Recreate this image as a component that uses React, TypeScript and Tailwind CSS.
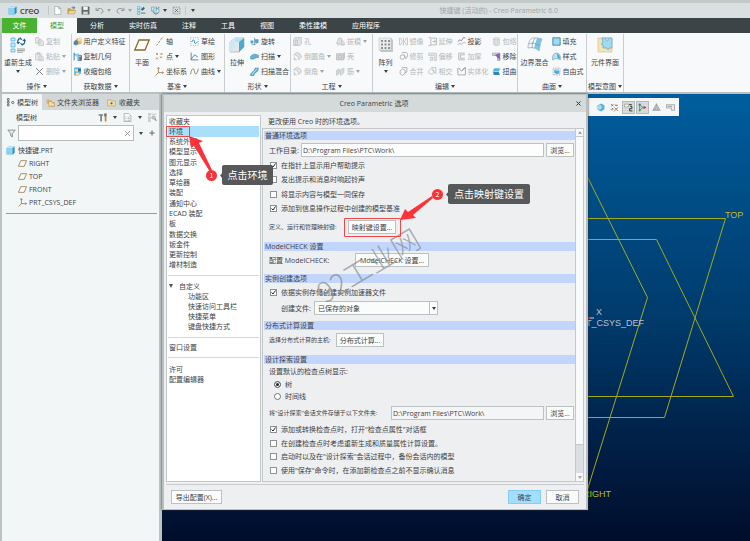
import React, { useState } from "react";

const BLUE = "#2b8fc0";
const SKY = "#8fd0ee";
const GOLD = "#8a6a2e";
const GRAY = "#b4b8ba";

const shapes: Record<string, React.ReactNode> = {
  cube: (
    <>
      <path d="M1 4l3-3h11v11l-3 3H1z" fill="#5db9e2" />
      <path d="M1 4h11v11H1z" fill={SKY} />
      <path d="M1 4l3-3h11l-3 3z" fill="#c5e9f8" />
      <path d="M12 4l3-3v11l-3 3z" fill={BLUE} />
    </>
  ),
  file: <path d="M3 1h7l4 4v10H3zM10 1v4h4" fill="#fff" stroke="#8d9496" />,
  open: (
    <>
      <path d="M1 14V4h5l1 2h6v8z" fill="#c69a4c" />
      <path d="M1 14l3-6h12l-3 6z" fill="#f3d48f" stroke="#a87f38" strokeWidth=".7" />
      <path d="M8 3c2-2 4-1 5 1M13 1v3h-3" fill="none" stroke="#333" />
    </>
  ),
  save: (
    <>
      <path d="M1 1h13l1 1v13H1z" fill="#62696c" />
      <path d="M4 1h8v6H4z" fill="#f2f4f4" />
      <path d="M4 10h8v5H4z" fill="#d3d7d8" />
    </>
  ),
  undo: <path d="M2 3v5h5M2 8c3-5 12-5 12 1 0 3-2 4-4 4" fill="none" stroke="#8c9496" strokeWidth="1.6" />,
  redo: <path d="M14 3v5H9M14 8C11 3 2 3 2 9c0 3 2 4 4 4" fill="none" stroke="#8c9496" strokeWidth="1.6" />,
  regen: (
    <>
      <path d="M1 1h4v4H1zM1 6h4v4H1zM1 11h4v4H1z" fill="#d9f1fb" stroke={BLUE} strokeWidth=".8" />
      <path d="M7 11h8v1H7zM7 13h8v1H7z" fill="#888" />
      <path d="M8 3h3V1l3 3-3 3V5H8z" fill="#1d6c98" />
      <path d="M13 7h-3v2L7 6l3-2z" fill="#1d6c98" />
    </>
  ),
  bigRegen: (
    <>
      <path d="M1 1h4v3H1zM1 6h4v4H1zM1 12h4v3H1z" fill="#c9ecfa" stroke="#3fa9d6" strokeWidth=".7" />
      <path d="M7 12h8M7 13.600h8M7 15.200h6" stroke="#777" strokeWidth=".7" />
      <path d="M8 6C7 3 9 1 11 2L10 0.500M14.500 3c1 3-1 5-3 4l1 1.500" fill="none" stroke="#155f8d" strokeWidth="1.200" />
      <path d="M6.500 5h3.500L8.300 7.500zM12.500 4H16l-1.700-2.500z" fill="#155f8d" />
    </>
  ),
  windows: (
    <>
      <path d="M1 2h9v7H1zM4 5h10v7H4z" fill="#dff3fb" stroke="#4a88a8" />
      <path d="M5 12c1 3 5 3 7 1M15 2l-3 2" fill="none" stroke="#333" />
    </>
  ),
  closeWin: (
    <>
      <path d="M2 2h12v12H2z" fill="none" stroke="#656c6f" strokeDasharray="3 1.500" />
      <path d="M5 5l6 6M11 5l-6 6" stroke="#656c6f" strokeWidth="1.500" />
    </>
  ),
  copy: <path d="M1 1h6l2 2v8H1zM6 5h6l3 3v7H6z" fill="#e4e6e7" stroke={GRAY} />,
  paste: <path d="M1 3h10v11H1zM4 1h4v3H4zM7 7h5l3 3v5H7z" fill="#e8eaeb" stroke={GRAY} />,
  del: <path d="M2 2l12 12M14 2L2 14" stroke="#777d80" strokeWidth="1.700" />,
  udf: (
    <>
      <path d="M5 3l8-2 2 3v8l-7 2z" fill="#e8b267" />
      <path d="M1 9l4-4 4 3v5l-4 2-4-2z" fill="#4e86b8" />
      <path d="M9 2h5v5H9z" fill="#fbe1b3" />
    </>
  ),
  geom: (
    <>
      <path d="M2 1v14M2 5h4M9 3v12h6V6H9" fill="none" stroke="#2d7da8" strokeWidth="1.600" />
      <path d="M5 3h5v5H5z" fill={SKY} />
      <path d="M11 8h4v6h-4z" fill="#666" />
    </>
  ),
  shrink: (
    <>
      <path d="M2 1h12v10l-4 4H2z" fill="#5fb6de" />
      <path d="M4 4h6v4H4zM5 10h6v4H5z" fill="#fbe39a" />
      <path d="M9 3h5v5H9z" fill="#2c6f9b" />
    </>
  ),
  plane: <path d="M5 3h10.200l-4.200 10H.8z" fill="#fdfdf8" stroke={GOLD} strokeWidth="1.300" />,
  axis: <path d="M13 1L3 15" stroke={GOLD} strokeWidth="1.300" strokeDasharray="5 2" />,
  point: <path d="M2 2l3 3M5 2L2 5M10 2l3 3M13 2l-3 3M2 10l3 3M5 10l-3 3M9 8l3 3M12 8l-3 3" stroke={GOLD} strokeWidth="1.200" />,
  csys: <path d="M6 1v9h9M6 10l-5 5M4 3l2-2 2 2M13 8l2 2-2 2" fill="none" stroke={GOLD} strokeWidth="1.300" />,
  sketch: (
    <>
      <path d="M1 1h14v14H1z" fill="none" stroke="#4aa6d2" strokeDasharray="2 2" />
      <path d="M3 9c3-7 5-3 5 0s3 4 5-1" fill="none" stroke="#1e7fb4" strokeWidth="1.600" />
    </>
  ),
  graph: (
    <>
      <path d="M2 1v13h13" fill="none" stroke="#555" strokeWidth="1.300" />
      <path d="M2 13l6-8 6 4" fill="none" stroke="#238bbf" strokeWidth="1.500" />
    </>
  ),
  curve: <path d="M1 13C3 1 7 1 8 8s4 6 7-5" fill="none" stroke={GOLD} strokeWidth="1.400" />,
  extrude: (
    <>
      <path d="M1 5l5-4h9v9l-5 5H1z" fill="#e3e8ea" stroke="#9ba8ae" strokeWidth=".6" />
      <path d="M6 1h9l-5 4H1z" fill="#b9e2f3" />
      <path d="M15 1v9L10 15V5z" fill="#4ba9d2" />
      <path d="M6 1v9L1 15V5z" fill="#cfe9f4" />
    </>
  ),
  revolve: (
    <>
      <path d="M1 6h5v5H1zM9 4h6v6H9z" fill="#4aa5cf" />
      <path d="M2 12c4 3 9 2 12-4M8 1v13" fill="none" stroke="#356e8b" />
    </>
  ),
  sweep: <path d="M1 8c4-5 9-5 14-2v4c-5-2-8 5-14 2z" fill="#5fb5da" stroke="#32718f" strokeWidth=".8" />,
  sweepBlend: (
    <>
      <path d="M1 15c0-7 7-5 8-13h6c-1 9-7 6-8 13z" fill="#5fb5da" stroke="#32718f" />
      <path d="M4 14C5 8 10 9 12 3" fill="none" stroke="#fff" />
    </>
  ),
  hole: <path d="M1 4l3-3h11v11l-3 3H1zM4 6h4v8H4z" fill="#dfe1e2" stroke={GRAY} />,
  round: <path d="M1 5l5-4c6 0 9 4 9 8l-5 5c0-5-3-9-9-9zM2 8v6h5" fill="#dfe1e2" stroke={GRAY} />,
  draft: <path d="M4 2h5l1 10H1zM9 2l6 9v3h-5M2 14h12" fill="#dfe1e2" stroke={GRAY} />,
  shell: <path d="M1 3h12v11H1zM4 6h6v5H4zM13 3l2-2v11l-2 2" fill="#d7dadb" stroke={GRAY} strokeWidth="1.300" />,
  rib: <path d="M1 6l4-3v9l-4 3zM6 6l8-4v8l-6 5z" fill="#d7dadb" stroke={GRAY} />,
  pattern: (
    <>
      <path d="M1 1h12l2 2v12H3l-2-2z" fill="#c4c7c8" />
      <path d="M1 1h12v12H1z" fill="#eceeee" stroke="#b7babb" strokeWidth=".5" />
      <path d="M3 3h2v2H3zM6.500 3h2v2h-2zM10 3h2v2h-2zM3 6.500h2v2H3zM6.500 6.500h2v2h-2zM10 6.500h2v2h-2zM3 10h2v2H3zM6.500 10h2v2h-2zM10 10h2v2h-2z" fill="#8f9394" />
    </>
  ),
  mirror: <path d="M8 1v14M1 2h2l3 6-3 6H1zM15 2h-2l-3 6 3 6h2z" fill="none" stroke={GRAY} strokeWidth="1.300" />,
  extend: <path d="M1 1h4v14H1M6 2h9v12H6M8 8h5M11 5l3 3-3 3" fill="none" stroke="#9ea3a5" strokeWidth="1.200" />,
  project: (
    <>
      <path d="M2 8c3-7 5 2 7-3s4-4 6-3" fill="none" stroke="#8656ad" strokeWidth="1.500" />
      <path d="M1 14c4-5 6 0 8-2s4-3 6-1" fill="none" stroke="#777" />
    </>
  ),
  trim: <path d="M5 1h8l2 2v6l-4 3M10 9a4 4 0 11-8 0 4 4 0 018 0zM8 4l5 7" fill="none" stroke="#a5a9ab" strokeWidth="1.400" />,
  offset: <path d="M1 2h14v13h-4V6H1zM4 9h4v6H4z" fill="#e2e4e5" stroke={GRAY} />,
  thicken: <path d="M14 2H3v12h11M14 5H6v6h8" fill="none" stroke="#a0a4a6" strokeWidth="1.300" />,
  merge: <path d="M6 1h8v8l-4 2M2 7l4-4 5 3v5l-5 4-4-3z" fill="none" stroke="#a0a4a6" strokeWidth="1.400" />,
  intersect: <path d="M10 5a5 5 0 11-9 4c0-4 5-8 9-4zM6 1h8v11l-7-7" fill="none" stroke={GRAY} strokeWidth="1.400" />,
  solidify: <path d="M1 3h4c0 5 5 5 6 0l4-2v13H2zM9 7l6-6" fill="none" stroke="#8e9395" strokeWidth="1.300" />,
  wrap: (
    <>
      <path d="M3 3v10c0 3 10 3 10 0V3z" fill="#dcdfe0" stroke={GRAY} />
      <ellipse cx="8" cy="3" rx="5" ry="2" fill="#eceeee" stroke={GRAY} />
    </>
  ),
  remove: (
    <>
      <path d="M1 2h13v13h-4V6H1z" fill="#e6dff0" stroke="#777" />
      <path d="M5 5l9 9V2z" fill="#8b5fb5" />
    </>
  ),
  warp: (
    <>
      <path d="M4 2h11l-3 6H1z" fill="#56b4de" />
      <path d="M2 9h10l2 5H3z" fill="#2f86b1" />
    </>
  ),
  boundary: (
    <>
      <path d="M4 2c3-2 7-1 11 0-2 4-2 8-3 12-3-3-7-4-11-3 0-4 1-7 3-9z" fill="#f3f8fa" stroke="#85949b" strokeWidth=".6" />
      <path d="M10 1c2 0 3 0 5 1-2 4-2 8-3 12-2-2-3-2-5-3 1-3 2-7 3-10z" fill="#79c6e8" />
      <path d="M2 7c4-2 8 0 11 2M8 1C6 4 5 8 5 11" fill="none" stroke="#71858e" strokeWidth=".6" />
    </>
  ),
  fill: <path d="M1.500 1.500h13v13h-13z" fill="#9adcf4" stroke="#2d6f8e" strokeWidth="1.400" />,
  style: (
    <>
      <path d="M1 14C1 5 3 2 8 2s7 3 7 12c-4-3-9-3-14 0z" fill="#b5e2f4" stroke="#5d8ca2" />
      <path d="M9 3c3 0 5 4 5 9l-4-1z" fill="#43a8d5" />
    </>
  ),
  freestyle: (
    <>
      <path d="M2 2h12v12H2z" fill="none" stroke="#5c646a" strokeDasharray="2 2" />
      <path d="M4 5l5-2 4 3v5l-5 2-4-3z" fill="#49abd7" />
      <path d="M4 5l5-2 4 3-5 1z" fill="#a8def4" />
    </>
  ),
  component: (
    <>
      <path d="M1 1h14v14H1z" fill="#f7e3b8" stroke="#d6bb82" strokeWidth=".6" />
      <path d="M5 1h10v10h-3c1 2-3 2-2 0H6V8c-2 1-2-3 0-2z" fill="#9edcf4" stroke="#4b9dc2" strokeWidth=".6" />
      <path d="M9 1c-1 4 3 4 2 1" fill="#f7e3b8" stroke="#4b9dc2" strokeWidth=".6" />
    </>
  ),
  tree: (
    <>
      <path d="M4 4v2M4 9v2" stroke="#555" />
      <path d="M2.500 1h3v3h-3zM2.500 6h3v3h-3zM2.500 11h3v3h-3z" fill="#fff" stroke="#444" strokeWidth="1.200" />
      <circle cx="12" cy="8" r="2" fill="none" stroke="#444" strokeWidth="1.300" />
    </>
  ),
  folders: (
    <>
      <path d="M1 2h5l1 2h4v6H1z" fill="#e2b565" />
      <path d="M5 6h5l1 2h4v7H5z" fill="#fbe2a8" stroke="#b98a39" />
      <path d="M10 10h4v4h-4z" fill="#fff" stroke="#888" strokeWidth=".7" />
    </>
  ),
  favorites: (
    <>
      <path d="M1 3h5l1 2h8v9H1z" fill="#f6dea5" stroke="#c09a51" />
      <circle cx="8" cy="9.500" r="2" fill="#2573a5" />
    </>
  ),
  tools: (
    <>
      <path d="M1 2h8v3H7v10H4V5H1z" fill="#7c8284" />
      <path d="M12 1h3v14h-3z" fill="#b98639" />
      <path d="M11 1h4v5h-4z" fill="#6d7375" />
    </>
  ),
  report: <path d="M2 1h8l4 4v10H2zM4 7h2M8 7h4M4 10h2M8 10h4M4 13h2M8 13h4" fill="#fff" stroke="#7b8285" />,
  search: (
    <>
      <path d="M1 1h3v3H1zM1 7h3v3H1zM1 12h3v3H1zM6 2h9M6 8h2" fill="none" stroke="#9da2a4" />
      <circle cx="10" cy="8" r="3" fill="#c9cccd" stroke="#8d9294" />
      <path d="M12 10l3 4" stroke="#8d9294" strokeWidth="2" />
    </>
  ),
  funnel: <path d="M1.500 2h13L9.500 8v6l-3-2V8z" fill="#eef0f0" stroke="#666d70" strokeWidth="1.300" />,
  plus: <path d="M8 1v14M1 8h14" stroke="#555b5e" strokeWidth="2.400" />,
  shade: (
    <>
      <path d="M2 5l7-4 6 3v7l-6 4-6-3z" fill="#58b2dc" />
      <path d="M1 6l7-3 3 5-4 4-5-2z" fill="#a7dbf0" />
    </>
  ),
  datum: (
    <>
      <path d="M2 2l4 4M6 2L2 6M8 8l6 6M14 8l-7 7M10 4h4M1 12h4" stroke={GOLD} strokeWidth="1.400" />
      <path d="M9 3l2 2M4 9l2 2" stroke="#333" strokeWidth="1.500" />
    </>
  ),
  annot: (
    <>
      <path d="M1 2h7v5H1z" fill="#fbf4d6" stroke="#888" />
      <path d="M9 3h5M11 6h3v4h-4v4h5" fill="none" stroke="#333" strokeWidth="1.700" />
    </>
  ),
  spin: (
    <>
      <path d="M3 3v10M4 4l5 4-5 4M9 8h5" fill="none" stroke="#2e8a8a" strokeWidth="1.500" />
      <circle cx="3" cy="3" r="2" fill="#2c7abd" />
      <circle cx="3" cy="13" r="2" fill="#4aa548" />
      <path d="M10 5l5 3-5 3z" fill="#cf3b3b" />
    </>
  ),
  persp: <path d="M8 2l6 11H2zM8 7l3 5H5z" fill="none" stroke="#9da2a4" strokeWidth="1.800" />,
  flag: <path d="M1 3h14v10h-5V9H1zM3 6h8" fill="none" stroke="#a9adaf" strokeWidth="1.900" />,
};

function Icon({ name, big = false }: { name: string; big?: boolean }) {
  return (
    <svg viewBox="0 0 16 16" className={big ? "size-4 shrink-0" : "size-[9px] shrink-0"} aria-hidden="true">
      {shapes[name]}
    </svg>
  );
}

function Caret({ dim = false }: { dim?: boolean }) {
  return (
    <svg viewBox="0 0 4 3" className="h-[3px] w-1 shrink-0" aria-hidden="true">
      <path d="M0 0h4L2 3z" fill={dim ? "#9ea3a5" : "#3b4042"} />
    </svg>
  );
}

type Cmd = { icon: string; text: string; off?: boolean; menu?: boolean };
const c = (icon: string, text: string, flags = ""): Cmd => ({
  icon,
  text,
  off: flags.includes("x"),
  menu: flags.includes("v"),
});

type Group = {
  title: string;
  width: string;
  big?: { icon: string; text: string; width: string; menu?: boolean };
  cols: { width: string; items: Cmd[] }[];
};

const groups: Group[] = [
  {
    title: "操作",
    width: "w-[70px]",
    big: { icon: "bigRegen", text: "重新生成", width: "w-8", menu: true },
    cols: [{ width: "w-[36px]", items: [c("copy", "复制", "x"), c("paste", "粘贴", "xv"), c("del", "删除", "xv")] }],
  },
  {
    title: "获取数据",
    width: "w-[58px]",
    cols: [{ width: "w-[56px]", items: [c("udf", "用户定义特征"), c("geom", "复制几何"), c("shrink", "收缩包络")] }],
  },
  {
    title: "基准",
    width: "w-[95px]",
    big: { icon: "plane", text: "平面", width: "w-6" },
    cols: [
      { width: "w-[34px]", items: [c("axis", "轴"), c("point", "点", "v"), c("csys", "坐标系")] },
      { width: "w-[34px]", items: [c("sketch", "草绘"), c("graph", "图形"), c("curve", "曲线", "v")] },
    ],
  },
  {
    title: "形状",
    width: "w-[66px]",
    big: { icon: "extrude", text: "拉伸", width: "w-6" },
    cols: [{ width: "w-[40px]", items: [c("revolve", "旋转"), c("sweep", "扫描", "v"), c("sweepBlend", "扫描混合")] }],
  },
  {
    title: "工程",
    width: "w-[82px]",
    cols: [
      { width: "w-[42px]", items: [c("hole", "孔", "x"), c("round", "倒圆角", "xv"), c("round", "倒角", "xv")] },
      { width: "w-[34px]", items: [c("draft", "拔模", "xv"), c("shell", "壳", "x"), c("rib", "筋", "xv")] },
    ],
  },
  {
    title: "编辑",
    width: "w-[145px]",
    big: { icon: "pattern", text: "阵列", width: "w-6", menu: true },
    cols: [
      { width: "w-[28px]", items: [c("mirror", "镜像", "x"), c("trim", "修剪", "x"), c("merge", "合并", "x")] },
      { width: "w-[28px]", items: [c("extend", "延伸", "x"), c("offset", "偏移", "x"), c("intersect", "相交", "x")] },
      { width: "w-[34px]", items: [c("project", "投影"), c("thicken", "加厚", "x"), c("solidify", "实体化", "x")] },
      { width: "w-[25px]", items: [c("wrap", "包络", "x"), c("remove", "移除"), c("warp", "扭曲")] },
    ],
  },
  {
    title: "曲面",
    width: "w-[69px]",
    big: { icon: "boundary", text: "边界混合", width: "w-8" },
    cols: [{ width: "w-[34px]", items: [c("fill", "填充"), c("style", "样式"), c("freestyle", "自由式")] }],
  },
  {
    title: "模型意图",
    width: "w-[37px]",
    big: { icon: "component", text: "元件界面", width: "w-8" },
    cols: [],
  },
];

function RibbonGroup({ g }: { g: Group }) {
  return (
    <section className={`flex shrink-0 flex-col border-r border-[#c9cdcf] px-px ${g.width}`}>
      <div className="flex h-[46px] justify-center gap-px">
        {g.big && (
          <button className={`flex shrink-0 flex-col items-center pt-[3px] ${g.big.width}`}>
            <Icon name={g.big.icon} big />
            <span className="mt-[6px] h-[11px]">{g.big.text}</span>
            {g.big.menu && <Caret />}
          </button>
        )}
        {g.cols.map((col, i) => (
          <div key={i} className={`flex shrink-0 flex-col ${col.width}`}>
            {col.items.map((it) => (
              <button
                key={it.text}
                disabled={it.off}
                className="flex h-[15px] items-center gap-[2px] text-left disabled:text-[#b3b7b9]"
              >
                <Icon name={it.icon} />
                <span>{it.text}</span>
                {it.menu && <Caret dim={it.off} />}
              </button>
            ))}
          </div>
        ))}
      </div>
      <div className="flex flex-1 items-center justify-center gap-[2px]">
        <span>{g.title}</span>
        <Caret />
      </div>
    </section>
  );
}

const quick: [string, string, boolean][] = [
  ["file", "新建", false],
  ["open", "打开", false],
  ["save", "保存", false],
  ["undo", "撤消", true],
  ["redo", "重做", true],
  ["regen", "重新生成", false],
  ["windows", "窗口", true],
  ["closeWin", "关闭", false],
];

function TopBar() {
  return (
    <header>
      <div className="flex h-[18px] items-center border-t-[3px] border-[#c3c9c9] bg-[#dadfdf] pb-px pl-2">
        <Icon name="cube" />
        <span className="ml-[3px] w-[28px] font-['Lato',sans-serif] text-[10px] text-[#333]">creo</span>
        <div className="flex items-center gap-[5px] border-x border-[#c1c7c8] px-1">
          {quick.map(([icon, label, menu]) => (
            <button key={icon} aria-label={label} className="flex items-center gap-[3px]">
              <Icon name={icon} />
              {menu && <Caret dim={icon !== "windows"} />}
            </button>
          ))}
        </div>
        <button aria-label="自定义快速访问工具栏" className="ml-[5px]">
          <Caret />
        </button>
        <span className="mr-[192px] ml-auto text-[#a0a6a8]">快捷键 (活动的) - Creo Parametric 6.0</span>
      </div>
      <nav className="ml-[2px] flex h-[15px] items-stretch bg-[#3b4446] text-white">
        <button className="w-[35px] bg-[#4ab233]">文件</button>
        <button className="w-10 bg-[#f7f9fa] text-[#4a9a30]">模型</button>
        {["分析", "实时仿真", "注释", "工具", "视图", "柔性建模", "应用程序"].map((t) => (
          <button key={t} className="ml-px px-3">
            {t}
          </button>
        ))}
      </nav>
      <div className="flex h-[61px] border-b-2 border-l-2 border-[#b9c0c2] bg-[#f7f9fa] pt-px">
        {groups.map((g) => (
          <RibbonGroup key={g.title} g={g} />
        ))}
      </div>
    </header>
  );
}

function ModelTree() {
  return (
    <aside className="w-[162px] shrink-0 border-r-[3px] border-l-2 border-[#bcc3c4] bg-[#f3f6f7]">
      <div className="flex h-4 bg-[#d2d8d9]">
        <button className="flex w-10 items-center gap-[2px] bg-[#f3f6f7] pl-1">
          <Icon name="tree" />
          模型树
        </button>
        <button className="flex w-[61px] items-center gap-[2px] pl-1">
          <Icon name="folders" />
          文件夹浏览器
        </button>
        <button className="flex items-center gap-[3px] pl-1">
          <Icon name="favorites" />
          收藏夹
        </button>
      </div>
      <div className="flex h-[15px] items-center gap-[6px] pr-[2px] pl-[14px]">
        <span className="mr-auto">模型树</span>
        <Icon name="tools" />
        <Caret />
        <Icon name="report" />
        <Caret />
        <Icon name="search" />
      </div>
      <div className="flex h-4 items-center gap-[5px] pr-1 pl-[5px]">
        <Icon name="funnel" />
        <label className="-ml-[3px] flex h-4 flex-1 items-center border border-[#b5bbbd] bg-white pr-[3px]">
          <input aria-label="筛选" className="w-0 flex-1 px-1 outline-none" />
          <svg viewBox="0 0 5 5" className="size-[5px]" aria-hidden="true">
            <path d="M0 0l5 5M5 0L0 5" stroke="#888" strokeWidth=".8" />
          </svg>
        </label>
        <Caret />
        <svg viewBox="0 0 16 16" className="ml-px size-[6px]" aria-hidden="true">
          {shapes.plus}
        </svg>
      </div>
      <ul className="mr-[2px] ml-1 border-b border-[#55d136] pt-[3px] pb-1">
        <li className="flex h-[13px] items-center gap-[3px]">
          <Icon name="cube" />
          快捷键.PRT
        </li>
        {["RIGHT", "TOP", "FRONT"].map((t) => (
          <li key={t} className="flex h-[13px] items-center gap-[2px] pl-3">
            <Icon name="plane" />
            {t}
          </li>
        ))}
        <li className="flex h-[13px] items-center gap-[2px] pl-3">
          <Icon name="csys" />
          PRT_CSYS_DEF
        </li>
      </ul>
    </aside>
  );
}

function Viewport() {
  return (
    <main className="relative flex-1 overflow-hidden bg-linear-to-b from-[#005e9e] via-[#003b6c] to-[#000d2c]">
      <svg
        viewBox="162 94 588 447"
        className="absolute top-0 left-0 h-[447px] w-[588px] font-['Liberation_Sans',sans-serif] text-[9px]"
      >
        <g fill="none" stroke="#a3a91c" strokeWidth="1">
          <path d="M587 176L647.500 297.500 587 491" />
          <path d="M587 218.500H725.500L664.500 417.500H587" />
          <path d="M587 239.500H656.500L733.500 396.500H587" />
        </g>
        <text x="725" y="218" fill="#b9bf1e">TOP</text>
        <text x="583" y="497" fill="#b9bf1e">RIGHT</text>
        <text x="644" y="326" fill="#b4c3d3" textAnchor="end">PRT_CSYS_DEF</text>
        <text x="596" y="315" fill="#b4c3d3">X</text>
        <path d="M587 318h7" stroke="#cfd6e0" />
        <path d="M587 316l4 2-4 2z" fill="#d5203c" />
      </svg>
      <div className="absolute top-[4px] left-[424px] flex h-[18px] items-center gap-[1px] bg-[#f4f6f7] pr-[2px] pl-2">
        {["shade", "datum", "annot", "spin", "persp", "flag"].map((n) => (
          <button
            key={n}
            aria-label={n}
            className={`flex size-[13px] items-center justify-center ${
              n === "annot" || n === "spin" ? "border border-[#b4babc] bg-[#d5dadb]" : ""
            }`}
          >
            <Icon name={n} />
          </button>
        ))}
      </div>
    </main>
  );
}

function Check({ label, on = false }: { label: string; on?: boolean }) {
  const [checked, setChecked] = useState(on);
  return (
    <label className="flex items-center gap-1">
      <span className="grid size-[7px]">
        <input
          type="checkbox"
          checked={checked}
          onChange={(e) => setChecked(e.target.checked)}
          className="col-start-1 row-start-1 size-[7px] appearance-none border border-[#8c9294] bg-white"
        />
        {checked && (
          <svg viewBox="0 0 7 7" className="pointer-events-none col-start-1 row-start-1 size-[7px]" aria-hidden="true">
            <path d="M1.500 3.500L3 5l2.500-3.500" fill="none" stroke="#222" />
          </svg>
        )}
      </span>
      {label}
    </label>
  );
}

function Radio({ label, on = false }: { label: string; on?: boolean }) {
  return (
    <label className="flex h-3 items-center gap-1 pl-[5px]">
      <input
        type="radio"
        name="checkpoint"
        defaultChecked={on}
        className="size-[7px] appearance-none rounded-full border border-[#6f7577] bg-white checked:bg-[#222] checked:shadow-[inset_0_0_0_1px_white]"
      />
      {label}
    </label>
  );
}

function Btn({ children, className = "" }: { children: React.ReactNode; className?: string }) {
  return (
    <button className={`h-[14px] shrink-0 border border-[#bcc1c3] bg-[#fafbfb] text-center whitespace-nowrap ${className}`}>
      {children}
    </button>
  );
}

function Head({ children }: { children: React.ReactNode }) {
  return <h2 className="flex h-[9px] items-center bg-[#c2d5fc] pl-px">{children}</h2>;
}

const mainPages = [
  "收藏夹", "环境", "系统外观", "模型显示", "图元显示", "选择", "草绘器", "装配",
  "通知中心", "ECAD 装配", "板", "数据交换", "钣金件", "更新控制", "增材制造",
];

function PageList() {
  return (
    <nav className="w-[95px] shrink-0 border border-[#c3c8ca] bg-white">
      <ul className="mx-px grid h-[154px] auto-rows-fr">
        {mainPages.map((p) => (
          <li key={p} className={`flex items-center pl-px ${p === "环境" ? "bg-[#a9dffb]" : ""}`}>
            <a href="#page">{p}</a>
          </li>
        ))}
      </ul>
      <ul className="mx-px mt-[5px] grid h-[63px] auto-rows-fr border-y border-[#d5d8da] py-[5px]">
        <li className="flex items-center gap-[6px] pl-px">
          <svg viewBox="0 0 4 4" className="size-1" aria-hidden="true">
            <path d="M0 0h4L2 4z" fill="#555" />
          </svg>
          <a href="#page">自定义</a>
        </li>
        {["功能区", "快速访问工具栏", "快捷菜单", "键盘快捷方式"].map((p) => (
          <li key={p} className="flex items-center pl-5">
            <a href="#page">{p}</a>
          </li>
        ))}
      </ul>
      <div className="mx-px flex h-5 items-center border-b border-[#d5d8da] pl-px">
        <a href="#page">窗口设置</a>
      </div>
      <ul className="mx-px grid h-[30px] auto-rows-fr pt-[6px] pb-1 pl-px">
        <li className="flex items-center"><a href="#page">许可</a></li>
        <li className="flex items-center"><a href="#page">配置编辑器</a></li>
      </ul>
    </nav>
  );
}

function Environment() {
  return (
    <div className="flex min-w-0 flex-1 flex-col">
      <p className="flex h-[13px] items-center pl-[6px]">更改使用 Creo 时的环境选项。</p>
      <div className="flex flex-1 border border-[#c3c8ca]">
        <div className="min-w-0 flex-1 pt-[2px] pl-px">
          <Head>普通环境选项</Head>
          <div className="mt-[3px] flex items-center pl-[5px]">
            <label htmlFor="workdir" className="w-[32px]">工作目录:</label>
            <input id="workdir" defaultValue={"D:\\Program Files\\PTC\\Work\\"} className="h-[14px] min-w-0 flex-1 border border-[#bcc1c3] bg-[#fdfdfd] px-px" />
            <Btn className="mr-px ml-[2px] w-7">浏览...</Btn>
          </div>
          <div className="mt-px grid h-[58px] auto-rows-fr pl-[6px]">
            <Check on label="在指针上显示用户帮助提示" />
            <Check label="发出提示和消息时响起铃声" />
            <Check label="将显示内容与模型一同保存" />
            <Check on label="添加到信息操作过程中创建的模型基准" />
          </div>
          <div className="mt-1 flex items-center pl-[5px]">
            <span className="w-[79px] text-[6px] whitespace-nowrap">定义、运行和管理映射键:</span>
            <Btn className="w-12">映射键设置...</Btn>
          </div>
          <div className="mt-2"><Head>ModelCHECK 设置</Head></div>
          <div className="mt-[2px] flex items-center pl-[5px]">
            <span className="w-[86px]">配置 ModelCHECK:</span>
            <Btn className="w-[74px]">ModelCHECK 设置...</Btn>
          </div>
          <div className="mt-[7px] mb-1"><Head>实例创建选项</Head></div>
          <div className="flex h-[10px] items-center pl-[6px]">
            <Check on label="依据实例存储创建实例加速器文件" />
          </div>
          <div className="mt-1 flex items-center pl-[17px]">
            <label htmlFor="instances" className="w-[33px]">创建文件:</label>
            <span className="grid w-[124px] items-center">
              <select id="instances" className="col-start-1 row-start-1 h-[14px] appearance-none border border-[#bcc1c3] bg-[#fafbfb] px-[3px]">
                <option>已保存的对象</option>
              </select>
              <span className="pointer-events-none col-start-1 row-start-1 mr-px flex h-3 w-2 items-center justify-center justify-self-end border-l border-[#bcc1c3] pl-px">
                <Caret />
              </span>
            </span>
          </div>
          <div className="mt-[6px] mb-[3px]"><Head>分布式计算设置</Head></div>
          <div className="flex items-center pl-[5px]">
            <span className="w-[67px] text-[6px] whitespace-nowrap">选择分布式计算的主机:</span>
            <Btn className="w-12">分布式计算...</Btn>
          </div>
          <div className="mt-2 mb-[3px]"><Head>设计探索设置</Head></div>
          <fieldset className="pl-[5px]">
            <legend className="h-[11px] leading-[10px]">设置默认的检查点树显示:</legend>
            <Radio on label="树" />
            <Radio label="时间线" />
          </fieldset>
          <div className="mt-1 flex items-center pl-[5px]">
            <label htmlFor="study" className="w-[122px] text-[6px] whitespace-nowrap">将"设计探索"会话文件存储于以下文件夹:</label>
            <input id="study" defaultValue={"D:\\Program Files\\PTC\\Work\\"} className="h-[14px] min-w-0 flex-1 border border-[#bcc1c3] bg-[#f4f5f6] px-px" />
            <Btn className="mr-px ml-[2px] w-7">浏览...</Btn>
          </div>
          <div className="mt-[3px] grid h-[54px] auto-rows-fr pl-[6px]">
            <Check on label={'添加或转换检查点时，打开"检查点属性"对话框'} />
            <Check label="在创建检查点时考虑重新生成和质量属性计算设置。" />
            <Check label={'启动时以及在"设计探索"会话过程中，备份会话内的模型'} />
            <Check label={'使用"保存"命令时，在添加新检查点之前不显示确认消息'} />
          </div>
        </div>
        <div className="flex w-2 shrink-0 flex-col border-l border-[#c3c8ca] bg-[#dcdfe1]">
          <span className="flex h-2 items-center justify-center border-b border-[#c3c8ca] bg-[#f7f8f8]">
            <span className="rotate-180 leading-none"><Caret dim /></span>
          </span>
          <span className="h-[308px] border-b border-[#c3c8ca] bg-[#f9fafa]" />
          <span className="mt-auto flex h-2 items-center justify-center bg-[#f7f8f8]">
            <Caret dim />
          </span>
        </div>
      </div>
    </div>
  );
}

function OptionsDialog() {
  return (
    <div
      role="dialog"
      aria-label="Creo Parametric 选项"
      className="absolute top-[94px] left-[162px] flex h-[416px] w-[426px] flex-col border-x-2 border-t border-b border-[#b7bfc1] bg-[#edeff1] shadow-[0_0_2px_#333]"
    >
      <div className="flex h-[17px] items-center bg-[#d4d9da]">
        <h1 className="flex-1 pl-2 text-center">Creo Parametric 选项</h1>
        <button aria-label="关闭" className="mr-[5px]">
          <svg viewBox="0 0 5 5" className="size-[5px]">
            <path d="M.5.500l4 4M4.500.500l-4 4" stroke="#333" />
          </svg>
        </button>
      </div>
      <div className="mx-[2px] mt-[3px] flex h-[367px] gap-px">
        <PageList />
        <Environment />
      </div>
      <div className="mx-[2px] mt-[2px] flex flex-1 items-center border-t border-[#c9cdcf] pr-[5px] pl-[5px]">
        <Btn className="mr-auto w-[51px]">导出配置(X)...</Btn>
        <button className="h-[14px] w-[33px] border border-[#86cdf3] bg-[#a2dffd]">确定</button>
        <Btn className="ml-[5px] w-[33px]">取消</Btn>
      </div>
    </div>
  );
}

function Annotations() {
  return (
    <>
      <svg
        viewBox="0 0 750 541"
        className="pointer-events-none absolute top-0 left-0 h-[541px] w-[750px] font-['Noto_Sans_CJK_SC',sans-serif]"
      >
        <text
          transform="translate(325 304) rotate(-31)"
          fontSize="28"
          fontWeight="300"
          fill="#85898c"
          fillOpacity="0.700"
        >
          92工业网
        </text>
        <g fill="none" stroke="#f04848">
          <path d="M166.500 126.500h23v10h-23z" />
          <path d="M344.500 218.500h56v18h-56z" />
        </g>
        <g fill="#fb3238">
          <path d="M189 136l2 12 3-2 16 26 2-2-13-27 4-2z" />
          <path d="M400 220l5-11 3 3 24-16 1 2-20 17 3 3z" />
          <circle cx="211.500" cy="175.500" r="5.500" />
          <circle cx="437.500" cy="194.500" r="5.500" />
        </g>
        <g fill="#fff" fontSize="7" textAnchor="middle">
          <text x="211.500" y="178">1</text>
          <text x="437.500" y="197">2</text>
        </g>
        <path d="M223 172v7l-3-3.500zM449 191v7l-3-3.500z" fill="#56585a" />
      </svg>
      <div className="absolute top-[165px] left-[222px] flex h-5 w-[51px] items-center justify-center rounded-[2px] bg-[#56585a] text-[10px] text-white">
        点击环境
      </div>
      <div className="absolute top-[184px] left-[448px] flex h-5 w-[82px] items-center justify-center rounded-[2px] bg-[#56585a] text-[10px] text-white">
        点击映射键设置
      </div>
    </>
  );
}

export default function App() {
  return (
    <div className="relative flex min-h-screen flex-col overflow-hidden bg-[#c3c9c9] font-['Open_Sans','Noto_Sans_CJK_SC',sans-serif] text-[7px] leading-none whitespace-nowrap text-[#3d4244]">
      <TopBar />
      <div className="flex flex-1">
        <ModelTree />
        <Viewport />
      </div>
      <OptionsDialog />
      <Annotations />
    </div>
  );
}
